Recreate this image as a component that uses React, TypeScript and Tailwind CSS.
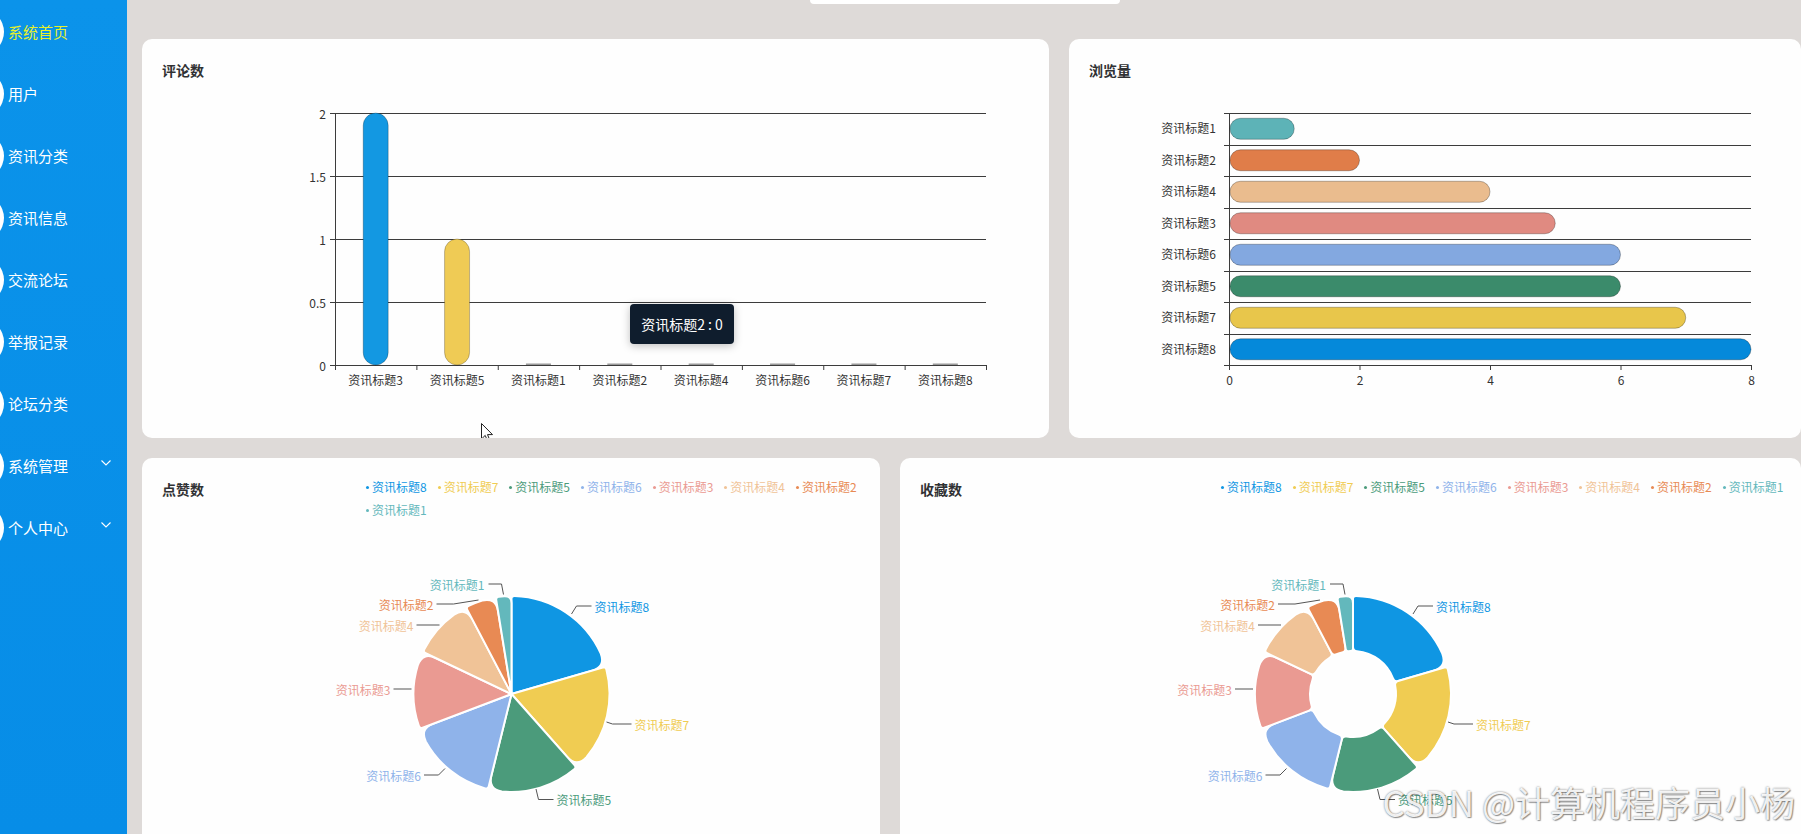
import { ReactNode } from 'react';

const PIE = ['#0f96e3', '#f0cc52', '#4b9b7b', '#8fb3ea', '#ea9a92', '#f0c397', '#e88a54', '#63b8bc'];
const PIE_NAMES = ['资讯标题8', '资讯标题7', '资讯标题5', '资讯标题6', '资讯标题3', '资讯标题4', '资讯标题2', '资讯标题1'];
const PIE_VALUES = [8, 7, 6, 6, 5, 4, 2, 1];

// label line points relative to pie centre, last point is where the text sits
const PIE_LABELS: { pts: number[][]; tx: number; anchor: 'start' | 'end' }[] = [
  { pts: [[60, -80], [65, -88], [80, -88]], tx: 83, anchor: 'start' },
  { pts: [[95, 28], [101, 30], [120, 30]], tx: 123, anchor: 'start' },
  { pts: [[24.5, 95], [27, 105.5], [42, 105.5]], tx: 45, anchor: 'start' },
  { pts: [[-66.5, 74.5], [-73, 81], [-87.5, 81]], tx: -90.5, anchor: 'end' },
  { pts: [[-100, -5], [-118, -5]], tx: -121, anchor: 'end' },
  { pts: [[-72, -69], [-95, -69]], tx: -98, anchor: 'end' },
  { pts: [[-33, -94], [-58, -90], [-75, -90]], tx: -78, anchor: 'end' },
  { pts: [[-8, -99.5], [-10, -110], [-23, -110]], tx: -27, anchor: 'end' },
];

const MENU = [
  { label: '系统首页', active: true },
  { label: '用户' },
  { label: '资讯分类' },
  { label: '资讯信息' },
  { label: '交流论坛' },
  { label: '举报记录' },
  { label: '论坛分类' },
  { label: '系统管理', sub: true },
  { label: '个人中心', sub: true },
];

function pt(cx: number, cy: number, r: number, a: number) {
  return `${(cx + r * Math.sin(a)).toFixed(2)},${(cy - r * Math.cos(a)).toFixed(2)}`;
}

// sector with rounded outer corners (small at start, larger at end), optional hole
function sector(cx: number, cy: number, r0: number, r1: number, a0: number, a1: number) {
  const span = a1 - a0;
  const cs = Math.min(3, (span * r1) / 4);
  const ce = Math.min(14, (span * r1) / 2.2, (r1 - r0) / 2);
  const large = span - (cs + ce) / r1 > Math.PI ? 1 : 0;
  let d = `M${pt(cx, cy, r1 - cs, a0)} Q${pt(cx, cy, r1, a0)} ${pt(cx, cy, r1, a0 + cs / r1)}`;
  d += ` A${r1},${r1} 0 ${large} 1 ${pt(cx, cy, r1, a1 - ce / r1)}`;
  d += ` Q${pt(cx, cy, r1, a1)} ${pt(cx, cy, r1 - ce, a1)}`;
  if (r0 <= 0) {
    d += ` L${cx},${cy} Z`;
  } else {
    const ci = Math.min(4, (span * r0) / 3);
    d += ` L${pt(cx, cy, r0 + ci, a1)} Q${pt(cx, cy, r0, a1)} ${pt(cx, cy, r0, a1 - ci / r0)}`;
    d += ` A${r0},${r0} 0 ${span > Math.PI ? 1 : 0} 0 ${pt(cx, cy, r0, a0 + ci / r0)}`;
    d += ` Q${pt(cx, cy, r0, a0)} ${pt(cx, cy, r0 + ci, a0)} Z`;
  }
  return d;
}

function Sidebar() {
  return (
    <aside className="w-[127px] shrink-0 overflow-hidden bg-gradient-to-b from-[#0b93ea] to-[#078de7] pt-px">
      {MENU.map(m => (
        <div key={m.label} className="flex h-[62px] items-center">
          <div className="ml-[-42px] h-[46px] w-[46px] shrink-0 rounded-full bg-white" />
          <span className={`ml-[4px] text-[15px] leading-[20px] ${m.active ? 'text-[#e6f02c]' : 'text-white'}`}>
            {m.label}
          </span>
          {m.sub && (
            <svg className="mb-[6px] ml-auto mr-[16px]" width="10" height="6" viewBox="0 0 10 6">
              <polyline points="0.5,0.5 5,5 9.5,0.5" fill="none" stroke="white" strokeWidth="1.1" />
            </svg>
          )}
        </div>
      ))}
    </aside>
  );
}

function Card({ title, className, children }: { title?: string; className: string; children: ReactNode }) {
  return (
    <div className={`relative overflow-hidden rounded-[10px] bg-[#fefefe] ${className}`}>
      {title && (
        <div className="h-[50px] pl-[20px] pt-[22px] text-[14px] font-bold leading-[18px] text-[#303133]">{title}</div>
      )}
      {children}
    </div>
  );
}

function CommentChart() {
  const cats = ['资讯标题3', '资讯标题5', '资讯标题1', '资讯标题2', '资讯标题4', '资讯标题6', '资讯标题7', '资讯标题8'];
  const vals = [2, 1, 0, 0, 0, 0, 0, 0];
  const colors = ['#1398e2', '#efcb55'];
  const left = 193;
  const right = 844;
  const step = (right - left) / 8;
  const y0 = 276;
  const unit = 126;
  return (
    <svg width="907" height="310" className="block">
      {[0, 0.5, 1, 1.5, 2].map(v => {
        const y = y0 - v * unit + 0.5;
        return (
          <g key={v}>
            <line x1={left - 5} x2={right} y1={y} y2={y} stroke="#3c3c3c" strokeWidth="1" />
            <text x={left - 9} y={y} textAnchor="end" dominantBaseline="central" fontSize="12" fill="#333">
              {v}
            </text>
          </g>
        );
      })}
      <line x1={left + 0.5} x2={left + 0.5} y1={24} y2={y0 + 5} stroke="#3c3c3c" />
      {Array.from({ length: 9 }).map((_, i) => (
        <line key={i} x1={left + step * i + 0.5} x2={left + step * i + 0.5} y1={y0} y2={y0 + 5} stroke="#3c3c3c" />
      ))}
      {cats.map((c, i) => {
        const cx = left + step * (i + 0.5);
        const h = vals[i] * unit;
        return (
          <g key={c}>
            {h > 0 ? (
              <rect x={cx - 12.5} y={y0 - h} width="25" height={h} rx="12.5" fill={colors[i]} stroke="rgba(0,0,0,0.3)" strokeWidth="0.8" />
            ) : (
              <rect x={cx - 12.5} y={y0 - 1.5} width="25" height="1.5" fill="#9a9a9a" />
            )}
            <text x={cx} y={y0 + 14} textAnchor="middle" dominantBaseline="central" fontSize="12" fill="#333">
              {c}
            </text>
          </g>
        );
      })}
    </svg>
  );
}

function ViewChart() {
  const rows = [
    { name: '资讯标题1', v: 1, c: '#5db3b7' },
    { name: '资讯标题2', v: 2, c: '#e07d49' },
    { name: '资讯标题4', v: 4, c: '#eabc8e' },
    { name: '资讯标题3', v: 5, c: '#e08a81' },
    { name: '资讯标题6', v: 6, c: '#83a8e0' },
    { name: '资讯标题5', v: 6, c: '#3b8b6b' },
    { name: '资讯标题7', v: 7, c: '#e8c64b' },
    { name: '资讯标题8', v: 8, c: '#0589da' },
  ];
  const left = 160;
  const right = 682;
  const unit = (right - left) / 8;
  const top = 24;
  const rowH = 31.5;
  const bottom = top + rowH * 8;
  return (
    <svg width="732" height="310" className="block">
      {Array.from({ length: 9 }).map((_, k) => {
        const y = Math.round(top + rowH * k) + 0.5;
        return <line key={k} x1={left - 5} x2={right} y1={y} y2={y} stroke="#3c3c3c" />;
      })}
      <line x1={left + 0.5} x2={left + 0.5} y1={top} y2={bottom + 5} stroke="#3c3c3c" />
      {rows.map((r, k) => {
        const cy = top + rowH * k + rowH / 2;
        return (
          <g key={r.name}>
            <rect x={left + 1} y={cy - 10.5} width={r.v * unit - 1} height="21" rx="10.5" fill={r.c} stroke="rgba(0,0,0,0.35)" strokeWidth="0.8" />
            <text x={left - 13} y={cy - 1} textAnchor="end" dominantBaseline="central" fontSize="12" fill="#333">
              {r.name}
            </text>
          </g>
        );
      })}
      {[0, 2, 4, 6, 8].map(t => {
        const x = left + t * unit + 0.5;
        return (
          <g key={t}>
            <line x1={x} x2={x} y1={bottom} y2={bottom + 5} stroke="#3c3c3c" />
            <text x={x} y={bottom + 14} textAnchor="middle" dominantBaseline="central" fontSize="12" fill="#333">
              {t}
            </text>
          </g>
        );
      })}
    </svg>
  );
}

function Legend({ className }: { className: string }) {
  return (
    <div className={`flex flex-wrap gap-y-[5px] pt-[20px] ${className}`}>
      {PIE_NAMES.map((n, i) => (
        <div key={n} className="mr-[11px] flex h-[18px] items-center text-[12px]" style={{ color: PIE[i] }}>
          <span className="mr-[3px] h-[3px] w-[3px] rounded-full" style={{ background: PIE[i] }} />
          {n}
        </div>
      ))}
    </div>
  );
}

function PieChart({ cx, hole, width }: { cx: number; hole: number; width: number }) {
  const cy = 156;
  const r = 98;
  const total = PIE_VALUES.reduce((a, b) => a + b, 0);
  let acc = 0;
  return (
    <svg width={width} height="320" className="block">
      {PIE_VALUES.map((v, i) => {
        const a0 = (acc / total) * Math.PI * 2;
        acc += v;
        const a1 = (acc / total) * Math.PI * 2;
        return <path key={i} d={sector(cx, cy, hole, r, a0, a1)} fill={PIE[i]} stroke="#fff" strokeWidth="2" strokeLinejoin="round" />;
      })}
      {PIE_LABELS.map((l, i) => {
        const last = l.pts[l.pts.length - 1];
        return (
          <g key={i}>
            <polyline points={l.pts.map(p => `${cx + p[0]},${cy + p[1]}`).join(' ')} fill="none" stroke="#555" strokeWidth="1" />
            <text x={cx + l.tx} y={cy + last[1]} textAnchor={l.anchor} dominantBaseline="central" fontSize="12" fill={PIE[i]}>
              {PIE_NAMES[i]}
            </text>
          </g>
        );
      })}
    </svg>
  );
}

export default function App() {
  return (
    <div className="relative flex h-[834px] w-[1801px] overflow-hidden bg-[#dedad8] font-['Noto_Sans_CJK_SC',sans-serif]">
      <Sidebar />
      <main className="min-w-0 flex-1 pl-[15px]">
        <div className="h-[39px]">
          <div className="ml-[668px] h-[4px] w-[310px] rounded-b-[6px] bg-white" />
        </div>

        <div className="flex h-[399px] gap-[20px]">
          <Card title="评论数" className="w-[907px] shrink-0">
            <CommentChart />
            <div className="absolute left-[488px] top-[265px] flex h-[40px] w-[104px] items-center justify-center rounded-[4px] bg-[#0f1d2d] text-[14px] text-white shadow-[0_2px_8px_rgba(0,0,0,0.25)]">
              资讯标题2 : 0
            </div>
            <svg className="absolute left-[339px] top-[384px]" width="13" height="20" viewBox="0 0 13 20">
              <path d="M0.5 0.5 L0.5 16 L4.2 12.4 L6.8 18.6 L9 17.6 L6.5 11.6 L11.5 11.6 Z" fill="#fff" stroke="#222" strokeWidth="1" strokeLinejoin="round" />
            </svg>
          </Card>
          <Card title="浏览量" className="flex-1">
            <ViewChart />
          </Card>
        </div>

        <div className="mt-[20px] flex h-[400px] gap-[20px]">
          <Card className="w-[738px] shrink-0">
            <div className="flex h-[80px] items-start">
              <div className="w-[224px] shrink-0 pl-[20px] pt-[22px] text-[14px] font-bold leading-[18px] text-[#303133]">点赞数</div>
              <Legend className="w-[512px]" />
            </div>
            <PieChart cx={369.5} hole={0} width={738} />
          </Card>
          <Card className="flex-1">
            <div className="flex h-[80px] items-start">
              <div className="w-[321px] shrink-0 pl-[20px] pt-[22px] text-[14px] font-bold leading-[18px] text-[#303133]">收藏数</div>
              <Legend className="w-[580px] flex-nowrap" />
            </div>
            <PieChart cx={453} hole={43} width={901} />
          </Card>
        </div>
      </main>

      <div className="pointer-events-none absolute bottom-[15px] right-[6px] text-[35px] leading-none text-white/90 [text-shadow:0_0_2px_rgba(0,0,0,0.55),1px_1px_1px_rgba(0,0,0,0.35)]">
        CSDN @计算机程序员小杨
      </div>
    </div>
  );
}
